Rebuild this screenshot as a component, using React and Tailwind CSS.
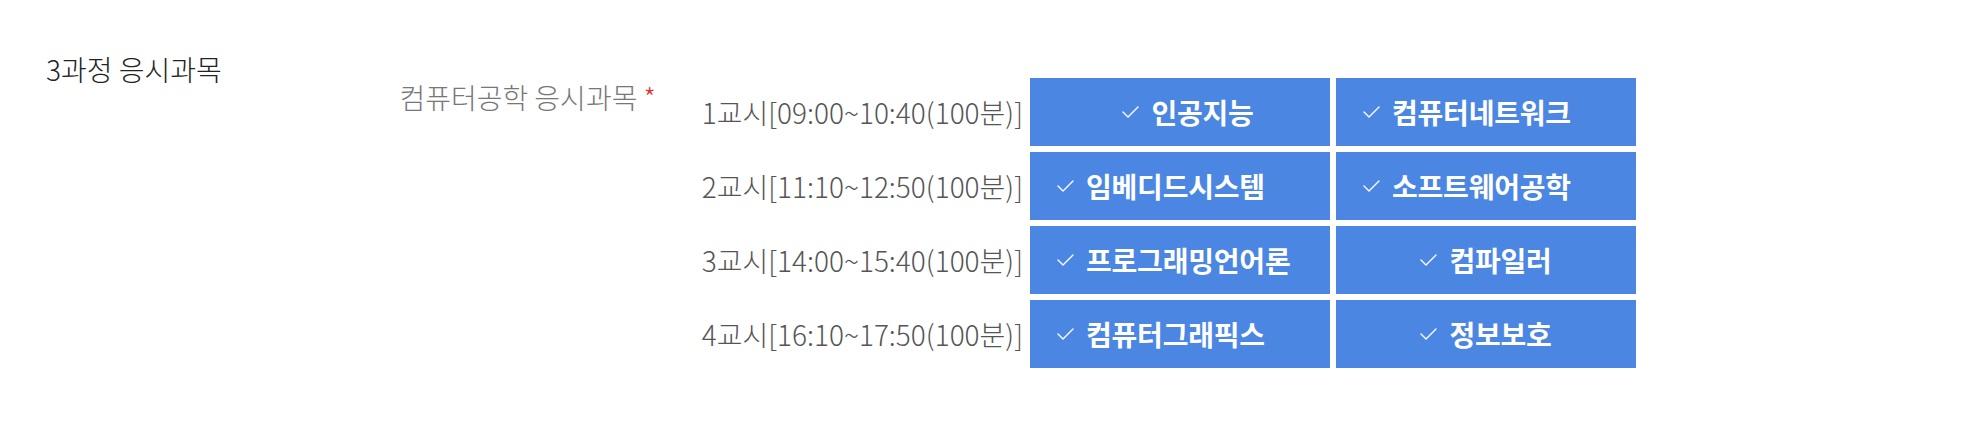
import React from "react";

const rows = [
  {
    time: "1교시[09:00~10:40(100분)]",
    subjects: [
      { name: "인공지능", align: "shift" },
      { name: "컴퓨터네트워크", align: "left" },
    ],
  },
  {
    time: "2교시[11:10~12:50(100분)]",
    subjects: [
      { name: "임베디드시스템", align: "left" },
      { name: "소프트웨어공학", align: "left" },
    ],
  },
  {
    time: "3교시[14:00~15:40(100분)]",
    subjects: [
      { name: "프로그래밍언어론", align: "left" },
      { name: "컴파일러", align: "center" },
    ],
  },
  {
    time: "4교시[16:10~17:50(100분)]",
    subjects: [
      { name: "컴퓨터그래픽스", align: "left" },
      { name: "정보보호", align: "center" },
    ],
  },
];

const boxAlign = {
  left: "justify-start pl-[27px]",
  center: "justify-center",
  shift: "justify-center pl-[16px]",
};

function Check() {
  return (
    <svg width="17" height="12" viewBox="0 0 17 12" fill="none" className="shrink-0">
      <polyline
        points="1,6 6,11 16,1"
        stroke="white"
        strokeWidth="1.4"
        strokeLinecap="round"
        strokeLinejoin="round"
      />
    </svg>
  );
}

function SubjectBox({ name, align }) {
  return (
    <div
      className={
        "flex h-[68px] w-[300px] items-center gap-[12px] bg-[#4a86e2] text-white " +
        boxAlign[align]
      }
    >
      <Check />
      <span className="text-[28px] font-bold leading-none tracking-[-0.2px]">{name}</span>
    </div>
  );
}

export default function App() {
  return (
    <div
      className="min-h-screen bg-white pl-[46px] pt-[50px]"
      style={{ fontFamily: '"Noto Sans CJK KR", "Noto Sans", sans-serif' }}
    >
      <div className="flex">
        <div className="w-[300px] text-[28px] font-light leading-[39px] text-[#222]">
          3과정 응시과목
        </div>
        <div className="mt-[28px] flex">
          <div className="w-[310px] text-right text-[28px] font-light leading-[39px] text-[#777]">
            컴퓨터공학 응시과목 <span className="text-[#e0332d]">*</span>
          </div>
          <div className="flex flex-col gap-[6px]">
            {rows.map((row) => (
              <div key={row.time} className="flex items-center">
                <div className="w-[374px] pr-[7px] text-right text-[28px] font-light leading-[39px] text-[#555]">
                  {row.time}
                </div>
                <div className="flex gap-[6px]">
                  {row.subjects.map((s) => (
                    <SubjectBox key={s.name} name={s.name} align={s.align} />
                  ))}
                </div>
              </div>
            ))}
          </div>
        </div>
      </div>
    </div>
  );
}
